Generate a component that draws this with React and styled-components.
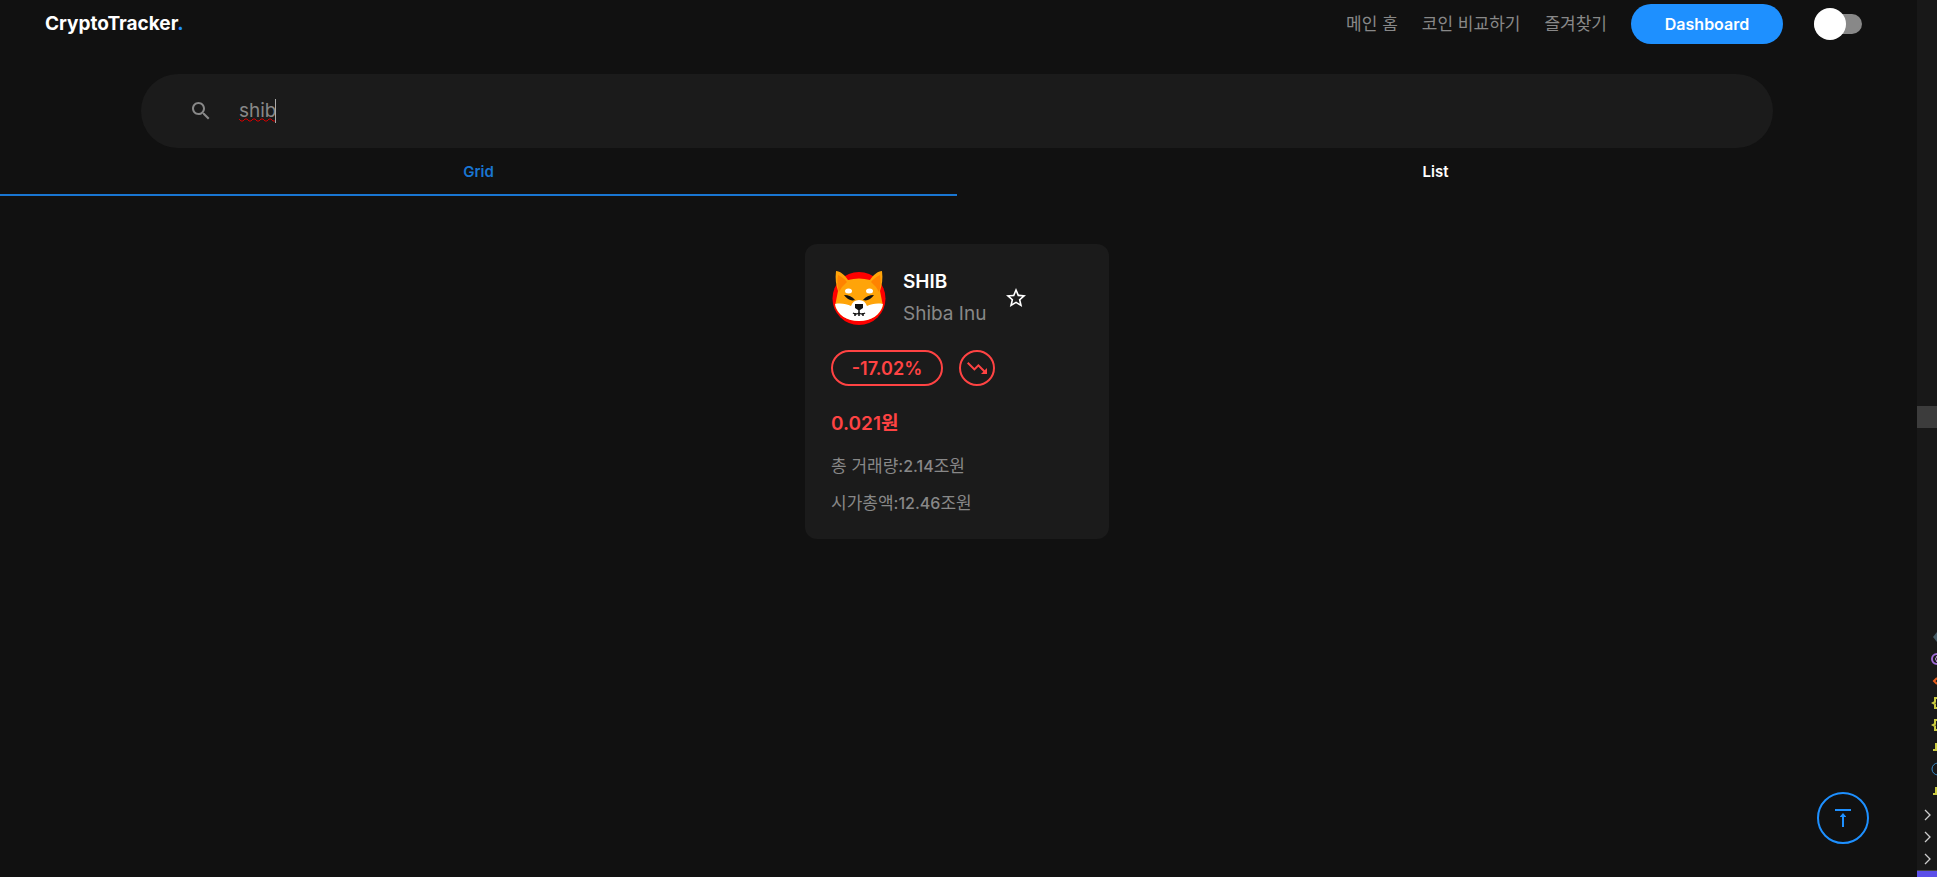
import React, { useState } from "react";
import styled, { createGlobalStyle } from "styled-components";

const GlobalStyle = createGlobalStyle`
  * { box-sizing: border-box; }
  body {
    margin: 0;
    background: #111;
    color: #fff;
    font-family: Inter, "Noto Sans CJK KR", sans-serif;
    overflow: hidden;
  }
  button, input { font: inherit; color: inherit; }
  p, h1, h2 { margin: 0; }
`;

const Screen = styled.div`
  display: flex;
  height: 100vh;
`;

const Page = styled.div`
  flex: 1;
  min-width: 0;
  padding-right: 3px;
`;

const Header = styled.header`
  display: flex;
  align-items: center;
  justify-content: space-between;
  height: 48px;
  padding: 0 52px 0 45px;
`;

const Logo = styled.h1`
  font-size: 19px;
  line-height: 24px;
  font-weight: 700;
  span { color: #1e90ff; }
`;

const Nav = styled.nav`
  display: flex;
  align-items: center;
  gap: 24px;
`;

const NavLink = styled.a`
  color: #888;
  font-size: 17px;
  line-height: 24px;
  text-decoration: none;
`;

const PrimaryButton = styled.button`
  width: 152px;
  height: 40px;
  padding: 0;
  border: 0;
  border-radius: 20px;
  background: #1e90ff;
  color: #fff;
  font-size: 16px;
  font-weight: 600;
`;

const Switch = styled.input`
  appearance: none;
  display: flex;
  align-items: center;
  width: 48px;
  height: 20px;
  margin: 0 0 0 7px;
  border-radius: 10px;
  background: #888;
  &::before {
    content: "";
    width: 32px;
    height: 32px;
    flex: none;
    border-radius: 50%;
    background: #fff;
  }
`;

const SearchBar = styled.label`
  display: flex;
  align-items: center;
  gap: 26px;
  height: 74px;
  margin: 26px 141px 0;
  padding: 0 48px;
  border-radius: 37px;
  background: #1b1b1b;
  color: #888;
`;

const SearchField = styled.div`
  position: relative;
  flex: 1;
  display: flex;
  svg { position: absolute; left: 0; bottom: 0; }
`;

const SearchInput = styled.input`
  width: 100%;
  padding: 0;
  border: 0;
  outline: 0;
  background: transparent;
  color: #888;
  font-size: 19px;
  line-height: 24px;
`;

const Tabs = styled.div`
  display: flex;
`;

const Tab = styled.button`
  flex: 1;
  height: 48px;
  padding: 0;
  border: 0;
  border-bottom: 2px solid ${(p) => (p.$active ? "#1976d2" : "transparent")};
  background: transparent;
  color: ${(p) => (p.$active ? "#1976d2" : "#fff")};
  font-size: 15px;
  font-weight: 600;
`;

const Grid = styled.main`
  display: flex;
  justify-content: center;
  padding: 48px;
`;

const Card = styled.article`
  width: 304px;
  padding: 26px 26px 24px;
  border-radius: 12px;
  background: #1b1b1b;
`;

const CoinHead = styled.div`
  display: flex;
  align-items: center;
  gap: 16px;
`;

const CoinNames = styled.div`
  display: flex;
  flex-direction: column;
  gap: 8px;
`;

const Symbol = styled.h2`
  font-size: 19px;
  line-height: 24px;
  font-weight: 600;
`;

const CoinName = styled.p`
  color: #888;
  font-size: 19px;
  line-height: 24px;
`;

const StarButton = styled.button`
  display: grid;
  place-items: center;
  width: 28px;
  height: 28px;
  padding: 0;
  border: 0;
  background: transparent;
`;

const ChangeRow = styled.div`
  display: flex;
  gap: 16px;
  margin-top: 24px;
  color: #ff4343;
`;

const ChangeChip = styled.span`
  display: grid;
  place-items: center;
  width: ${(p) => (p.$round ? 36 : 112)}px;
  height: 36px;
  border: 2px solid #ff4343;
  border-radius: 18px;
  font-size: 18px;
  font-weight: 600;
`;

const Price = styled.p`
  margin: 24px 0 16px;
  color: #ff4343;
  font-size: 19px;
  line-height: 28px;
  font-weight: 600;
`;

const Stat = styled.p`
  color: #888;
  font-size: 17px;
  line-height: 24px;
  & + & { margin-top: 13px; }
  strong {
    font-size: 16px;
    font-weight: 500;
  }
`;

const TopButton = styled.button`
  position: fixed;
  right: 68px;
  bottom: 33px;
  display: grid;
  place-items: center;
  width: 52px;
  height: 52px;
  padding: 0;
  border: 2px solid #1e90ff;
  border-radius: 50%;
  background: transparent;
  color: #1e90ff;
`;

const SidePanel = styled.aside`
  display: flex;
  flex-direction: column;
  justify-content: space-between;
  flex: none;
  width: 20px;
  background: #181818;
  overflow: hidden;
`;

const PanelBlock = styled.div`
  display: flex;
  flex-direction: column;
`;

const FileList = styled.div`
  padding-bottom: 2px;
`;

const SelectedRow = styled.div`
  height: 22px;
  margin-top: 406px;
  background: #3c3c3c;
`;

const FileRow = styled.div`
  display: flex;
  justify-content: ${(p) => (p.$folder ? "center" : "flex-end")};
  align-items: center;
  height: 22px;
`;

const StatusBar = styled.div`
  height: 7px;
  border-top: 1px solid #444;
  background: #5b4fe8;
`;

const Shiba = () => (
  <svg width="56" height="56" viewBox="0 0 56 56" aria-label="Shiba Inu" role="img">
    <circle cx="28" cy="28.5" r="26.5" fill="#f00" />
    <path fill="#ffa409" d="M5 1C9 1 14 5 17 10Q28 7 39 10C42 5 47 1 51 1C52 9 51 15 49 21L52 36Q47 50 28 51Q9 50 4 36L7 21C5 15 4 9 5 1Z" />
    <path fill="#ff8300" d="M7 5C11 7 14 9 16 12Q11 16 8 22C6 16 6 10 7 5ZM49 5C45 7 42 9 40 12Q45 16 48 22C50 16 50 10 49 5Z" />
    <path fill="#fff" d="M4 34C10 33 16 34 20 36Q22 30 28 30T36 36C40 34 46 33 52 34C50 45 40 51 28 51S6 45 4 34Z" />
    <ellipse cx="17.5" cy="21" rx="3.5" ry="2.5" fill="#fff" />
    <ellipse cx="38.5" cy="21" rx="3.5" ry="2.5" fill="#fff" />
    <path fill="#111" d="M13 25Q20 25 24 30Q18 32 13 25ZM43 25Q36 25 32 30Q38 32 43 25ZM24 34H32V38L29 40H27L24 38Z" />
    <path fill="none" stroke="#111" strokeWidth="1.5" d="M28 40V44M22 43Q25 45 28 43Q31 45 34 43M24 43V46M28 43V46M32 43V46" />
  </svg>
);

const FILE_GLYPHS = [
  <path d="M6 4L2 9L6 14Z" fill="#455a64" />,
  <><circle cx="6" cy="9" r="5" fill="none" stroke="#a06bd6" strokeWidth="2" /><path d="M6 6Q3 9 6 12" fill="none" stroke="#cf9be8" /></>,
  <path d="M6 6L3 9L6 12" fill="none" stroke="#e65d1c" strokeWidth="2" />,
  <path d="M6 4H4V8L2 9L4 10V14H6" fill="none" stroke="#cbcb41" strokeWidth="2" />,
  <path d="M6 4H4V8L2 9L4 10V14H6" fill="none" stroke="#cbcb41" strokeWidth="2" />,
  <path d="M5 5V12H2" fill="none" stroke="#cbcb41" strokeWidth="2" />,
  <circle cx="7" cy="9" r="6" fill="none" stroke="#3b8ac4" strokeWidth="1" />,
  <path d="M5 5V12H2" fill="none" stroke="#cbcb41" strokeWidth="2" />,
];

export default function App() {
  const [query, setQuery] = useState("shib");
  return (
    <Screen>
      <GlobalStyle />
      <Page>
        <Header>
          <Logo>CryptoTracker<span>.</span></Logo>
          <Nav>
            <NavLink href="#home">메인 홈</NavLink>
            <NavLink href="#compare">코인 비교하기</NavLink>
            <NavLink href="#watchlist">즐겨찾기</NavLink>
            <PrimaryButton type="button">Dashboard</PrimaryButton>
            <Switch type="checkbox" role="switch" aria-label="Theme" />
          </Nav>
        </Header>
        <SearchBar>
          <svg width="24" height="24" viewBox="0 0 24 24" fill="currentColor" aria-hidden="true">
            <path d="M15.5 14h-.79l-.28-.27C15.41 12.59 16 11.11 16 9.5 16 5.91 13.09 3 9.5 3S3 5.91 3 9.5 5.91 16 9.5 16c1.61 0 3.09-.59 4.23-1.57l.27.28v.79l5 4.99L20.49 19l-4.99-5zm-6 0C7.01 14 5 11.99 5 9.5S7.01 5 9.5 5 14 7.01 14 9.5 11.99 14 9.5 14z" />
          </svg>
          <SearchField>
            <SearchInput aria-label="Search" value={query} onChange={(e) => setQuery(e.target.value)} spellCheck={false} />
            <svg width="38" height="24" viewBox="0 0 38 24" aria-hidden="true">
              <path d="M0 20L2 22H4L6 20H8L10 22H12L14 20H16L18 22H20L22 20H24L26 22H28L30 20H32L34 22H36" fill="none" stroke="#d00000" />
              <path d="M36.5 0V24" stroke="#aaa" />
            </svg>
          </SearchField>
        </SearchBar>
        <Tabs role="tablist">
          <Tab role="tab" aria-selected="true" $active>Grid</Tab>
          <Tab role="tab" aria-selected="false">List</Tab>
        </Tabs>
        <Grid>
          <Card>
            <CoinHead>
              <Shiba />
              <CoinNames>
                <Symbol>SHIB</Symbol>
                <CoinName>Shiba Inu</CoinName>
              </CoinNames>
              <StarButton type="button" aria-label="Add to watchlist">
                <svg width="24" height="24" viewBox="0 0 24 24" fill="#fff">
                  <path d="m22 9.24-7.19-.62L12 2 9.19 8.63 2 9.24l5.46 4.73L5.82 21 12 17.27 18.18 21l-1.63-7.03L22 9.24zM12 15.4l-3.76 2.27 1-4.28-3.32-2.88 4.38-.38L12 6.1l1.71 4.04 4.38.38-3.32 2.88 1 4.28L12 15.4z" />
                </svg>
              </StarButton>
            </CoinHead>
            <ChangeRow>
              <ChangeChip>-17.02%</ChangeChip>
              <ChangeChip $round>
                <svg width="24" height="24" viewBox="0 0 24 24" fill="currentColor" aria-hidden="true">
                  <path d="m16 18 2.29-2.29-4.88-4.88-4 4L2 7.41 3.41 6l6 6 4-4 6.3 6.29L22 12v6z" />
                </svg>
              </ChangeChip>
            </ChangeRow>
            <Price>0.021원</Price>
            <Stat>총 거래량:<strong>2.14</strong>조원</Stat>
            <Stat>시가총액:<strong>12.46</strong>조원</Stat>
          </Card>
        </Grid>
        <TopButton type="button" aria-label="Back to top">
          <svg width="24" height="24" viewBox="0 0 24 24" fill="currentColor">
            <path d="M4 3h16v2H4zM9 10.5L12 7l3 3.500V11H13v10h-2V11H9z" />
          </svg>
        </TopButton>
      </Page>
      <SidePanel>
        <SelectedRow />
        <PanelBlock>
          <FileList>
            {FILE_GLYPHS.map((glyph, i) => (
              <FileRow key={i}>
                <svg width="6" height="18" viewBox="0 0 6 18">{glyph}</svg>
              </FileRow>
            ))}
          </FileList>
          {[0, 1, 2].map((i) => (
            <FileRow key={i} $folder>
              <svg width="8" height="12" viewBox="0 0 8 12">
                <path d="M2 1L7 6L2 11" fill="none" stroke="#ccc" strokeWidth="1.3" />
              </svg>
            </FileRow>
          ))}
          <StatusBar />
        </PanelBlock>
      </SidePanel>
    </Screen>
  );
}
